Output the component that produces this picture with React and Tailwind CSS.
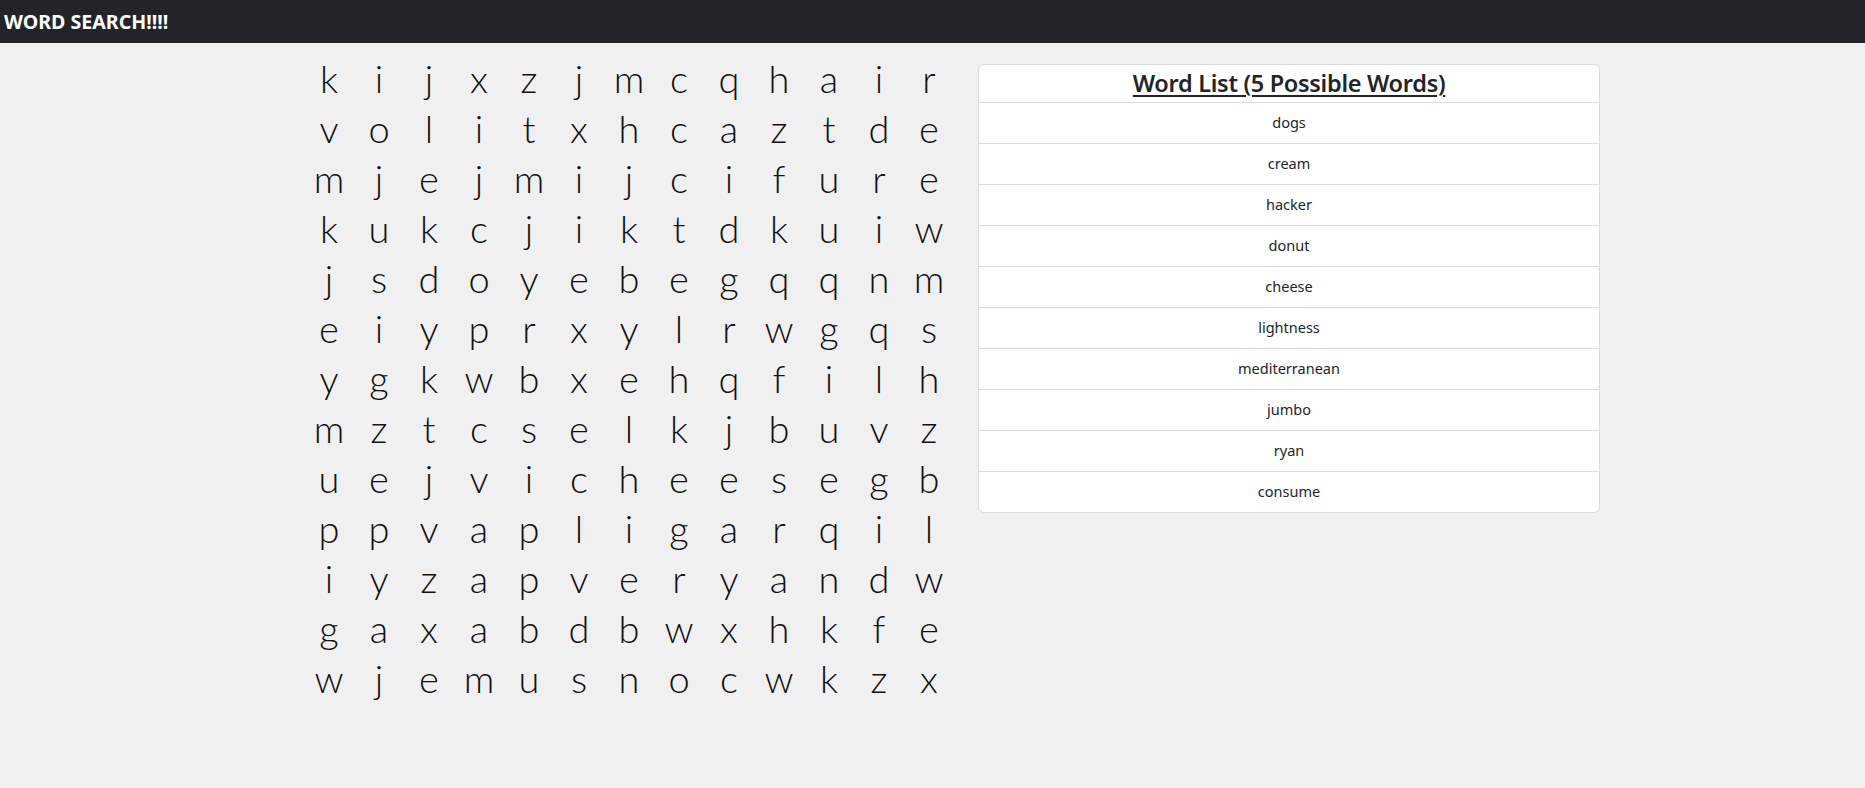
import React from "react";

const GRID = [
  "kijxzjmcqhair",
  "volitxhcaztde",
  "mjejmijcifure",
  "kukcjiktdkuiw",
  "jsdoyebegqqnm",
  "eiyprxylrwgqs",
  "ygkwbxehqfilh",
  "mztcselkjbuvz",
  "uejvicheesegb",
  "ppvapligarqil",
  "iyzapveryandw",
  "gaxabdbwxhkfe",
  "wjemusnocwkzx",
];

const WORDS = [
  "dogs",
  "cream",
  "hacker",
  "donut",
  "cheese",
  "lightness",
  "mediterranean",
  "jumbo",
  "ryan",
  "consume",
];

export default function App() {
  return (
    <div className="min-h-[788px] bg-[#f0f0f0]">
      <div className="h-[43px] bg-[#212529] flex items-center pl-[4px]">
        <span className="text-white font-bold text-[19.6px] font-['Noto_Sans',sans-serif]">
          WORD SEARCH!!!!
        </span>
      </div>
      <div className="flex items-start pl-[304px] pt-[10px] gap-[24px]">
        <div className="grid grid-cols-[repeat(13,50px)] w-[650px] font-['Lato',sans-serif] font-light text-[38px] leading-[50px] text-[#111]">
          {GRID.map((row, r) =>
            row.split("").map((ch, c) => (
              <div key={r + "-" + c} className="h-[50px] text-center">
                {ch}
              </div>
            ))
          )}
        </div>
        <div className="mt-[11px] w-[622px] bg-white border border-[#dcdcdc] rounded-[6px] font-['Noto_Sans',sans-serif] text-[#212529]">
          <div className="h-[38px] border-b border-[#dcdcdc] flex items-center justify-center">
            <span className="text-[23.5px] font-semibold underline underline-offset-[3px] decoration-[2px] tracking-[-0.3px]">
              Word List (5 Possible Words)
            </span>
          </div>
          {WORDS.map((w, i) => (
            <div
              key={w}
              className={
                "flex items-center justify-center text-[14.5px] " +
                (i < WORDS.length - 1 ? "h-[41px] border-b border-[#dcdcdc]" : "h-[40px]")
              }
            >
              {w}
            </div>
          ))}
        </div>
      </div>
    </div>
  );
}
